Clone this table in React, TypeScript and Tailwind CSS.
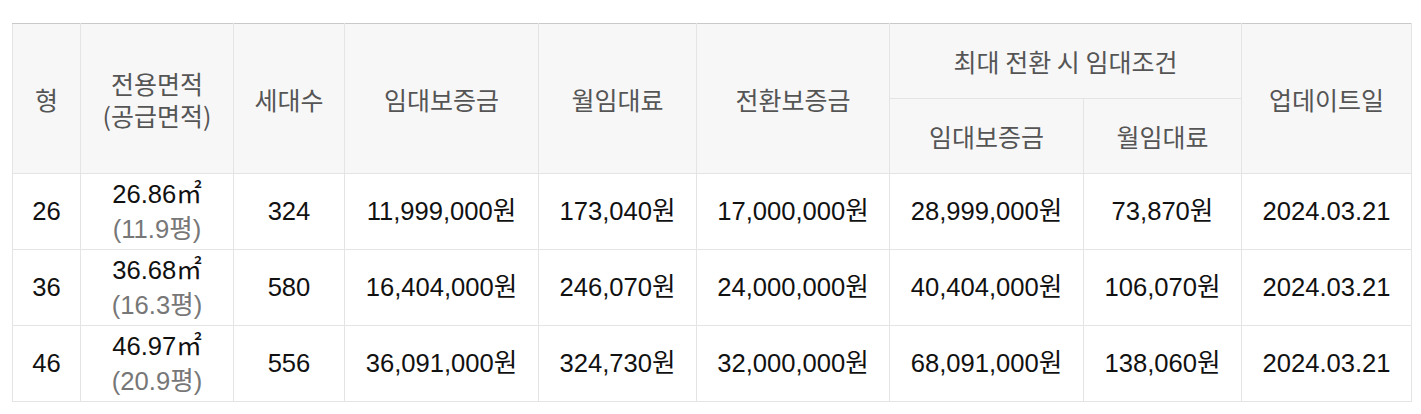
import React from "react";

interface Row {
  type: string;
  area: string;
  pyeong: string;
  units: string;
  deposit: string;
  rent: string;
  convDeposit: string;
  maxDeposit: string;
  maxRent: string;
  updated: string;
}

const rows: Row[] = [
  {
    type: "26",
    area: "26.86",
    pyeong: "(11.9평)",
    units: "324",
    deposit: "11,999,000원",
    rent: "173,040원",
    convDeposit: "17,000,000원",
    maxDeposit: "28,999,000원",
    maxRent: "73,870원",
    updated: "2024.03.21",
  },
  {
    type: "36",
    area: "36.68",
    pyeong: "(16.3평)",
    units: "580",
    deposit: "16,404,000원",
    rent: "246,070원",
    convDeposit: "24,000,000원",
    maxDeposit: "40,404,000원",
    maxRent: "106,070원",
    updated: "2024.03.21",
  },
  {
    type: "46",
    area: "46.97",
    pyeong: "(20.9평)",
    units: "556",
    deposit: "36,091,000원",
    rent: "324,730원",
    convDeposit: "32,000,000원",
    maxDeposit: "68,091,000원",
    maxRent: "138,060원",
    updated: "2024.03.21",
  },
];

const th =
  "border border-[#e4e4e4] bg-[#f7f7f7] font-normal text-[#555] text-[25px] leading-[36px] text-center align-middle";
const td =
  "border border-[#e4e4e4] text-[25.6px] leading-[35px] text-center align-middle text-[#111] h-[76px]";

const App: React.FC = () => {
  return (
    <div className="bg-white w-[1421px] h-[414px] pt-[23px] pl-[12px] font-['Liberation_Sans','Noto_Sans_CJK_KR',sans-serif]">
      <table className="border-collapse table-fixed w-[1399px] border-t border-t-[#c9c9c9]">
        <colgroup>
          <col className="w-[68px]" />
          <col className="w-[153px]" />
          <col className="w-[111px]" />
          <col className="w-[194px]" />
          <col className="w-[158px]" />
          <col className="w-[193px]" />
          <col className="w-[194px]" />
          <col className="w-[158px]" />
          <col className="w-[170px]" />
        </colgroup>
        <thead className="font-['Noto_Sans_CJK_KR',sans-serif]">
          <tr className="h-[75px]">
            <th rowSpan={2} className={`${th} border-t-[#c9c9c9]`}>
              형
            </th>
            <th rowSpan={2} className={`${th} border-t-[#c9c9c9]`}>
              <div className="leading-[32px]">전용면적</div>
              <div className="leading-[32px]">(공급면적)</div>
            </th>
            <th rowSpan={2} className={`${th} border-t-[#c9c9c9]`}>
              세대수
            </th>
            <th rowSpan={2} className={`${th} border-t-[#c9c9c9]`}>
              임대보증금
            </th>
            <th rowSpan={2} className={`${th} border-t-[#c9c9c9]`}>
              월임대료
            </th>
            <th rowSpan={2} className={`${th} border-t-[#c9c9c9]`}>
              전환보증금
            </th>
            <th colSpan={2} className={`${th} border-t-[#c9c9c9]`}>
              최대 전환 시 임대조건
            </th>
            <th rowSpan={2} className={`${th} border-t-[#c9c9c9]`}>
              업데이트일
            </th>
          </tr>
          <tr className="h-[75px]">
            <th className={th}>임대보증금</th>
            <th className={th}>월임대료</th>
          </tr>
        </thead>
        <tbody>
          {rows.map((r) => (
            <tr key={r.type}>
              <td className={td}>{r.type}</td>
              <td className={`${td} leading-[34px]`}>
                <div>
                  {r.area}
                  <span>㎡</span>
                </div>
                <div className="text-[#777]">{r.pyeong}</div>
              </td>
              <td className={td}>{r.units}</td>
              <td className={td}>{r.deposit}</td>
              <td className={td}>{r.rent}</td>
              <td className={td}>{r.convDeposit}</td>
              <td className={td}>{r.maxDeposit}</td>
              <td className={td}>{r.maxRent}</td>
              <td className={td}>{r.updated}</td>
            </tr>
          ))}
        </tbody>
      </table>
    </div>
  );
};

export default App;
